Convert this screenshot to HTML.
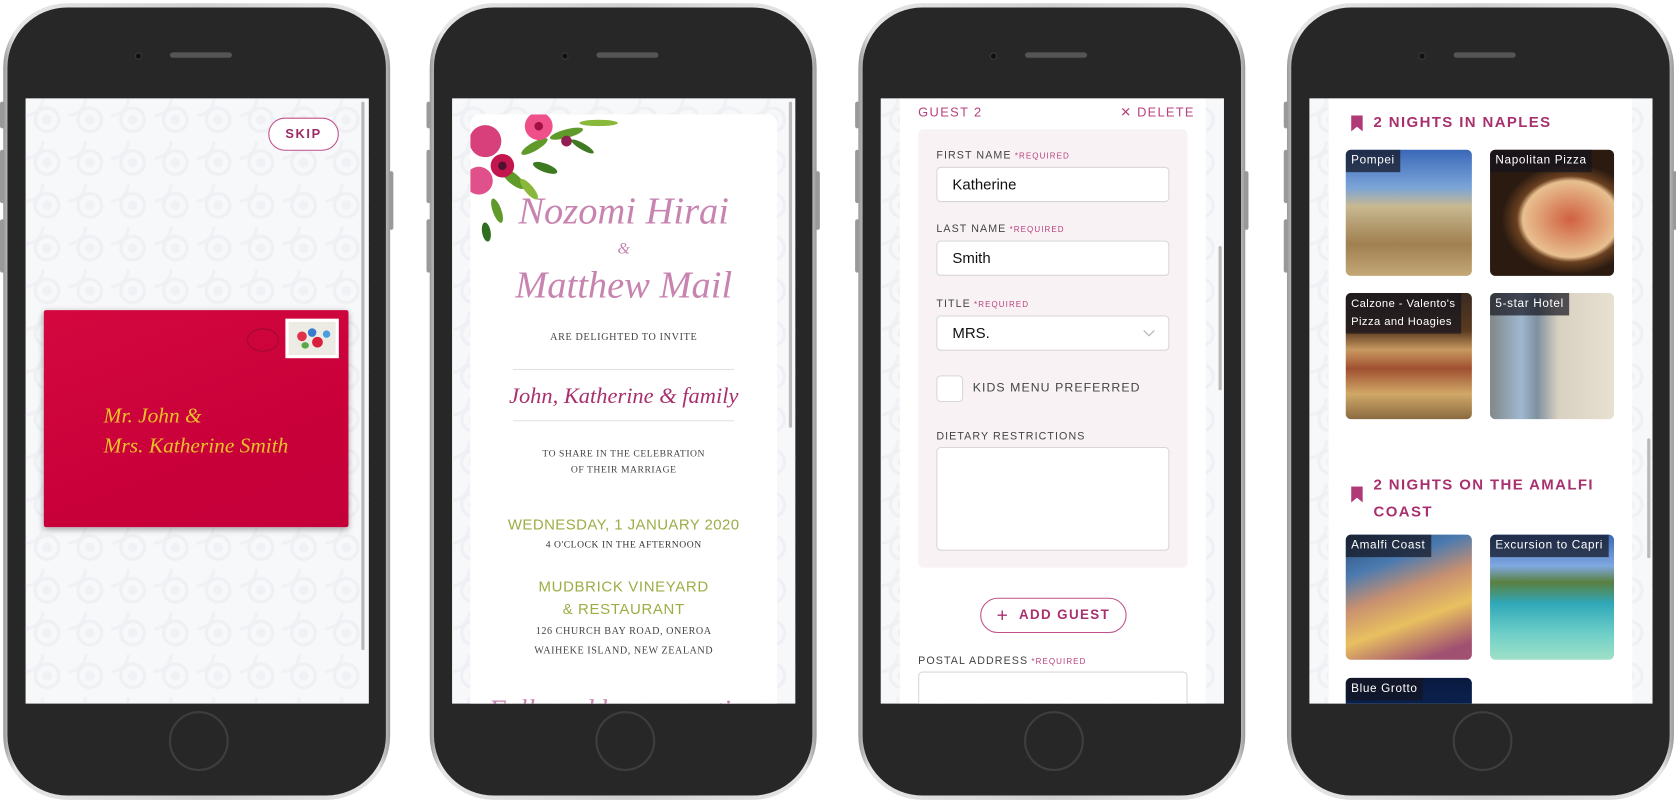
<!DOCTYPE html>
<html><head><meta charset="utf-8"><style>
*{margin:0;padding:0;box-sizing:border-box}
html,body{width:1676px;height:802px;overflow:hidden;background:#fff}
#wrap{position:absolute;left:0;top:0;width:1568px;height:750px;transform:scale(1.0689,1.0693);transform-origin:0 0;font-family:"Liberation Sans",sans-serif}
.phone{position:absolute;top:3px;width:362px;height:745px;border-radius:60px;background:linear-gradient(90deg,#9a9a9a,#e6e6e6 3%,#cfcfcf 50%,#e6e6e6 97%,#9a9a9a)}
.inner{position:absolute;left:4px;top:4px;right:4px;bottom:4px;border-radius:56px;background:#272727}
.cam{position:absolute;left:119px;top:42px;width:7px;height:7px;border-radius:50%;background:#111;border:1px solid #3a3a3a}
.spk{position:absolute;left:152px;top:42px;width:58px;height:5px;border-radius:3px;background:#555}
.home{position:absolute;left:151px;top:658px;width:56px;height:56px;border-radius:50%;border:2px solid #3e3e3e}
.btn{position:absolute;width:4px;background:#999;border-radius:2px}
.screen{position:absolute;left:21px;top:89px;width:321px;height:566px;overflow:hidden;background:#f7f8fa}
.pat{position:absolute;inset:0;background-color:#f7f8fa;background-image:radial-gradient(circle at 50% 50%,transparent 9px,#eef0f3 10px,#eef0f3 12px,transparent 13px),radial-gradient(circle at 0 0,transparent 14px,#f0f1f4 15px,#f0f1f4 17px,transparent 18px),radial-gradient(circle at 50% 50%,#eff1f4 4px,transparent 5px);background-size:40px 40px}
.abs{position:absolute}
.sb{position:absolute;width:3px;background:#b9b9b9;border-radius:2px}
.script{font-family:"Liberation Serif",serif;font-style:italic}
.serif{font-family:"Liberation Serif",serif}
.c{text-align:center;left:0;right:0}
.lbl{position:absolute;font-size:10px;letter-spacing:1px;color:#444;white-space:nowrap}
.lbl b{font-weight:normal;color:#b8407c;font-size:7.5px;margin-left:3px}
.inp{position:absolute;background:#fff;border:1px solid #d9d6d8;border-radius:4px;font-size:14px;color:#111;padding-left:14px;line-height:31px}
.tile{position:absolute;border-radius:5px;overflow:hidden}
.tile span{position:absolute;left:0;top:0;background:rgba(20,20,30,.7);color:#fff;font-size:11px;letter-spacing:.6px;padding:2px 5px;line-height:17px;white-space:nowrap}
.h{position:absolute;color:#a8306e;font-weight:bold;font-size:14px;letter-spacing:1.3px}
.bm{position:absolute;width:11px;height:15px;background:#b03a78;clip-path:polygon(0 0,100% 0,100% 100%,50% 70%,0 100%)}
</style></head><body><div id="wrap">

<!-- PHONE 1 -->
<div class="phone" style="left:3px">
<div class="btn" style="left:-3px;top:92px;height:25px"></div>
<div class="btn" style="left:-3px;top:137px;height:50px"></div>
<div class="btn" style="left:-3px;top:202px;height:50px"></div>
<div class="btn" style="left:361px;top:157px;height:55px"></div>
<div class="inner"><div class="cam"></div><div class="spk"></div><div class="home"></div></div>
<div class="screen">
<div class="pat"></div>
<div class="sb" style="left:314px;top:3px;height:513px"></div>
<div class="abs" style="left:227px;top:18px;width:66px;height:31px;border:1.5px solid #c0508a;border-radius:16px;background:#fff;text-align:center;line-height:28px;font-size:12px;font-weight:bold;letter-spacing:1.5px;color:#9b2a66">SKIP</div>
<div class="abs" style="left:17px;top:198px;width:285px;height:203px;background:linear-gradient(160deg,#d4083f,#c9003a 60%,#c4003a);box-shadow:0 2px 6px rgba(0,0,0,.35);border-radius:2px">
<div class="abs" style="left:190px;top:17px;width:30px;height:22px;border-radius:50%;border:1px solid #9e0a33"></div>
<div class="abs" style="left:226px;top:8px;width:50px;height:37px;background:#fff;padding:3px">
<div style="width:100%;height:100%;background:#ecebe4;position:relative">
<div class="abs" style="left:8px;top:9px;width:9px;height:9px;border-radius:50%;background:#e0304a"></div>
<div class="abs" style="left:18px;top:6px;width:8px;height:8px;border-radius:50%;background:#3a7bd0"></div>
<div class="abs" style="left:22px;top:14px;width:10px;height:10px;border-radius:50%;background:#d8203a"></div>
<div class="abs" style="left:32px;top:8px;width:7px;height:7px;border-radius:50%;background:#4a9ee0"></div>
<div class="abs" style="left:12px;top:19px;width:7px;height:6px;border-radius:50%;background:#5aa84a"></div>
</div></div>
<div class="abs script" style="left:56px;top:85px;font-size:20px;line-height:28px;color:#e8c227">Mr. John &amp;<br>Mrs. Katherine Smith</div>
</div>
</div></div>

<!-- PHONE 2 -->
<div class="phone" style="left:402px">
<div class="btn" style="left:-3px;top:92px;height:25px"></div>
<div class="btn" style="left:-3px;top:137px;height:50px"></div>
<div class="btn" style="left:-3px;top:202px;height:50px"></div>
<div class="btn" style="left:361px;top:157px;height:55px"></div>
<div class="inner"><div class="cam"></div><div class="spk"></div><div class="home"></div></div>
<div class="screen">
<div class="pat"></div>
<div class="sb" style="left:315px;top:3px;height:305px"></div>
<div class="abs" style="left:17px;top:15px;width:287px;height:600px;background:#fff;border-radius:8px;overflow:hidden">
<svg class="abs" style="left:0;top:0" width="160" height="125" viewBox="0 0 160 125">
<g fill="#5f9a2a"><ellipse cx="60" cy="30" rx="14" ry="4" transform="rotate(-30 60 30)"/><ellipse cx="90" cy="18" rx="16" ry="4" transform="rotate(-15 90 18)"/><ellipse cx="120" cy="8" rx="18" ry="3" fill="#8ab83a"/><ellipse cx="40" cy="60" rx="14" ry="5" transform="rotate(40 40 60)"/><ellipse cx="70" cy="50" rx="12" ry="4" transform="rotate(20 70 50)" fill="#3e7a22"/><ellipse cx="25" cy="90" rx="12" ry="4" transform="rotate(70 25 90)"/><ellipse cx="15" cy="110" rx="9" ry="4" transform="rotate(80 15 110)" fill="#2f6e1e"/><ellipse cx="55" cy="70" rx="12" ry="4" transform="rotate(50 55 70)" fill="#8ab83a"/><ellipse cx="105" cy="30" rx="12" ry="3" transform="rotate(30 105 30)" fill="#3e7a22"/></g>
<circle cx="14" cy="25" r="15" fill="#d8407c"/><circle cx="30" cy="48" r="11" fill="#c4164e"/><circle cx="8" cy="62" r="13" fill="#e0508a"/><circle cx="64" cy="11" r="13" fill="#f0508a"/><circle cx="64" cy="11" r="4" fill="#a01040"/><circle cx="90" cy="25" r="5" fill="#902050"/><circle cx="30" cy="48" r="4" fill="#501030"/>
</svg>
<div class="abs c script" style="top:68px;font-size:36px;line-height:44px;color:#c884b0">Nozomi Hirai</div>
<div class="abs c script" style="top:118px;font-size:15px;color:#c884b0">&amp;</div>
<div class="abs c script" style="top:137px;font-size:36px;line-height:44px;color:#c884b0">Matthew Mail</div>
<div class="abs c serif" style="top:204px;font-size:9.5px;letter-spacing:.6px;color:#444">ARE DELIGHTED TO INVITE</div>
<div class="abs" style="left:40px;width:207px;top:238px;height:1px;background:#e2e2e4"></div>
<div class="abs c script" style="top:251px;font-size:21px;color:#a8306e">John, Katherine &amp; family</div>
<div class="abs" style="left:40px;width:207px;top:286px;height:1px;background:#e2e2e4"></div>
<div class="abs c serif" style="top:310px;font-size:9px;line-height:15px;letter-spacing:.5px;color:#444">TO SHARE IN THE CELEBRATION<br>OF THEIR MARRIAGE</div>
<div class="abs c" style="top:375px;font-size:14px;letter-spacing:.4px;color:#9bae45">WEDNESDAY, 1 JANUARY 2020</div>
<div class="abs c serif" style="top:397px;font-size:9px;letter-spacing:.5px;color:#333">4 O'CLOCK IN THE AFTERNOON</div>
<div class="abs c" style="top:431px;font-size:14px;line-height:21px;letter-spacing:.6px;color:#9bae45">MUDBRICK VINEYARD<br>&amp; RESTAURANT</div>
<div class="abs c serif" style="top:475px;font-size:9.5px;line-height:18px;letter-spacing:.5px;color:#444">126 CHURCH BAY ROAD, ONEROA<br>WAIHEKE ISLAND, NEW ZEALAND</div>
<div class="abs c script" style="top:542px;font-size:26px;color:#c884b0">Followed by a reception</div>
</div>
</div></div>

<!-- PHONE 3 -->
<div class="phone" style="left:803px">
<div class="btn" style="left:-3px;top:92px;height:25px"></div>
<div class="btn" style="left:-3px;top:137px;height:50px"></div>
<div class="btn" style="left:-3px;top:202px;height:50px"></div>
<div class="btn" style="left:361px;top:157px;height:55px"></div>
<div class="inner"><div class="cam"></div><div class="spk"></div><div class="home"></div></div>
<div class="screen">
<div class="pat"></div>
<div class="abs" style="left:18px;top:0;width:286px;height:566px;background:#fff"></div>
<div class="sb" style="left:316px;top:138px;height:135px"></div>
<div class="abs" style="left:35px;top:6px;font-size:12px;letter-spacing:1.3px;color:#b8407c">GUEST 2</div>
<div class="abs" style="left:224px;top:6px;font-size:12px;letter-spacing:1.2px;color:#b8407c">✕ DELETE</div>
<div class="abs" style="left:35px;top:29px;width:252px;height:410px;background:#f8f2f4;border-radius:5px"></div>
<div class="lbl" style="left:52px;top:48px">FIRST NAME<b>*REQUIRED</b></div>
<div class="inp" style="left:52px;top:64px;width:218px;height:33px">Katherine</div>
<div class="lbl" style="left:52px;top:117px">LAST NAME<b>*REQUIRED</b></div>
<div class="inp" style="left:52px;top:133px;width:218px;height:33px">Smith</div>
<div class="lbl" style="left:52px;top:187px">TITLE<b>*REQUIRED</b></div>
<div class="inp" style="left:52px;top:203px;width:218px;height:33px">MRS.<svg class="abs" style="right:12px;top:12px" width="12" height="8"><path d="M1 1l5 5 5-5" fill="none" stroke="#bbb" stroke-width="1.2"/></svg></div>
<div class="abs" style="left:52px;top:259px;width:25px;height:25px;background:#fff;border:1px solid #d9d6d8;border-radius:4px"></div>
<div class="lbl" style="left:86px;top:265px;font-size:11.5px">KIDS MENU PREFERRED</div>
<div class="lbl" style="left:52px;top:311px">DIETARY RESTRICTIONS</div>
<div class="inp" style="left:52px;top:326px;width:218px;height:97px"></div>
<div class="abs" style="left:93px;top:467px;width:137px;height:33px;border:1.5px solid #c0508a;border-radius:17px;text-align:center;line-height:30px;font-size:12.5px;font-weight:bold;letter-spacing:1.3px;color:#a8306e"><span style="font-weight:normal;font-size:18px;vertical-align:-2px">+</span>&nbsp; ADD GUEST</div>
<div class="lbl" style="left:35px;top:521px">POSTAL ADDRESS<b>*REQUIRED</b></div>
<div class="inp" style="left:35px;top:536px;width:252px;height:60px"></div>
</div></div>

<!-- PHONE 4 -->
<div class="phone" style="left:1204px">
<div class="btn" style="left:-3px;top:92px;height:25px"></div>
<div class="btn" style="left:-3px;top:137px;height:50px"></div>
<div class="btn" style="left:-3px;top:202px;height:50px"></div>
<div class="btn" style="left:361px;top:157px;height:55px"></div>
<div class="inner"><div class="cam"></div><div class="spk"></div><div class="home"></div></div>
<div class="screen">
<div class="pat"></div>
<div class="abs" style="left:18px;top:0;width:284px;height:566px;background:#fff"></div>
<div class="sb" style="left:316px;top:318px;height:112px"></div>
<div class="bm" style="left:39px;top:16px"></div>
<div class="h" style="left:60px;top:14px">2 NIGHTS IN NAPLES</div>
<div class="tile" style="left:34px;top:48px;width:118px;height:118px;background:linear-gradient(180deg,#3a68b8 0%,#7ba4d8 30%,#c8b890 45%,#a08050 75%,#c4a878 100%)"><span>Pompei</span></div>
<div class="tile" style="left:169px;top:48px;width:116px;height:118px;background:radial-gradient(ellipse 70% 55% at 65% 55%,#d06040 0%,#e8c090 55%,#6a4020 62%,#2a1a10 80%)"><span>Napolitan Pizza</span></div>
<div class="tile" style="left:34px;top:182px;width:118px;height:118px;background:linear-gradient(180deg,#3a2a20 0%,#5a3a20 30%,#c89860 45%,#a05030 60%,#d0a868 80%,#8a6a40 100%)"><span style="font-size:10.5px;letter-spacing:.4px">Calzone - Valento's<br>Pizza and Hoagies</span></div>
<div class="tile" style="left:169px;top:182px;width:116px;height:118px;background:linear-gradient(90deg,#808888 0%,#a0b8d0 25%,#8090a0 38%,#d8d0c0 55%,#e8e0d0 100%)"><span>5-star Hotel</span></div>
<div class="bm" style="left:39px;top:363px"></div>
<div class="h" style="left:60px;top:349px;line-height:25px">2 NIGHTS ON THE AMALFI<br>COAST</div>
<div class="tile" style="left:34px;top:408px;width:118px;height:117px;background:linear-gradient(160deg,#2a4a70 0%,#4a7ab0 25%,#c89070 45%,#e8c060 65%,#a05070 90%)"><span>Amalfi Coast</span></div>
<div class="tile" style="left:169px;top:408px;width:116px;height:117px;background:linear-gradient(180deg,#3a6ab8 0%,#80a8e0 25%,#5a8040 38%,#30a8b8 55%,#70d0c8 80%,#a0e0c8 100%)"><span>Excursion to Capri</span></div>
<div class="tile" style="left:34px;top:542px;width:118px;height:60px;background:linear-gradient(180deg,#0a1a40,#0a2a60)"><span>Blue Grotto</span></div>
</div></div>

</div></body></html>
